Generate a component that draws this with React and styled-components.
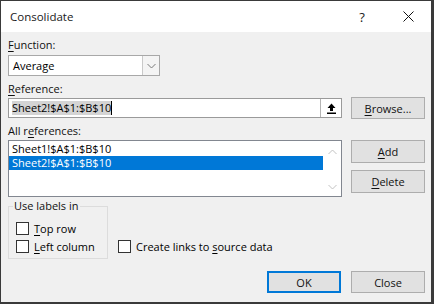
import React from 'react';
import styled, { createGlobalStyle } from 'styled-components';

const GlobalStyle = createGlobalStyle`
  html, body { margin: 0; padding: 0; background: #fff; }
  body {
    font-family: "Open Sans", "Noto Sans", sans-serif;
    font-size: 11px;
    color: #000;
  }
  * { box-sizing: border-box; }
  u { text-decoration-thickness: 1px; text-underline-offset: 2px; }
`;

const Window = styled.div`
  width: 434px;
  height: 304px;
  border-style: solid;
  border-color: #3a3a3a;
  border-width: 1px 3px 2px 1px;
  display: flex;
  flex-direction: column;
  background: #f0f0f0;
`;

const TitleBar = styled.div`
  height: 31px;
  flex: none;
  background: #fff;
  display: flex;
  align-items: center;
  padding-left: 9px;
`;

const Title = styled.div`
  flex: 1;
  font-size: 11.5px;
  color: #1a1a1a;
`;

const TitleButton = styled.div`
  width: 46px;
  height: 31px;
  display: flex;
  align-items: center;
  justify-content: center;
  font-size: 13px;
  color: #222;
`;

const Body = styled.div`
  flex: 1;
  display: flex;
  flex-direction: column;
  padding: 5px 6px 0 7px;
`;

const FieldLabel = styled.div`
  height: 16px;
  line-height: 16px;
  margin-top: ${(p) => p.$gap || 0}px;
  color: #111;
`;

const Select = styled.div`
  margin-top: 2px;
  width: 152px;
  height: 21px;
  border: 1px solid #a8a8a8;
  background: #fff;
  display: flex;
`;

const SelectValue = styled.div`
  flex: 1;
  padding-left: 4px;
  line-height: 19px;
`;

const SelectArrow = styled.div`
  width: 17px;
  border-left: 1px solid #c9c9c9;
  background: #f4f4f4;
  display: flex;
  align-items: center;
  justify-content: center;
`;

const Row = styled.div`
  display: flex;
  gap: 9px;
  align-items: ${(p) => p.$align || 'center'};
  margin-top: ${(p) => p.$gap || 0}px;
`;

const RefInput = styled.div`
  width: 334px;
  height: 20px;
  border: 1px solid #9a9a9a;
  background: #fff;
  display: flex;
`;

const RefText = styled.div`
  flex: 1;
  padding-left: 3px;
  display: flex;
  align-items: center;
`;

const Selection = styled.span`
  background: #d4d4d4;
  line-height: 14px;
`;

const Caret = styled.span`
  width: 1px;
  height: 14px;
  background: #000;
`;

const CollapseButton = styled.div`
  width: 21px;
  border-left: 1px solid #b4b4b4;
  display: flex;
  align-items: center;
  justify-content: center;
`;

const Button = styled.div`
  width: 74px;
  height: ${(p) => p.$h || 22}px;
  border: ${(p) => (p.$default ? '2px solid #0078d7' : '1px solid #adadad')};
  background: #e1e1e1;
  display: flex;
  align-items: center;
  justify-content: center;
  color: #111;
`;

const ListBox = styled.div`
  width: 334px;
  height: 57px;
  border: 1px solid #828790;
  background: #fff;
  display: flex;
`;

const ListItems = styled.div`
  flex: 1;
  padding-top: 1px;
`;

const ListItem = styled.div`
  height: 14px;
  line-height: 14px;
  padding-left: 3px;
  overflow: hidden;
  background: ${(p) => (p.$selected ? '#0078d7' : 'transparent')};
  color: ${(p) => (p.$selected ? '#fff' : '#000')};
`;

const ScrollBar = styled.div`
  width: 18px;
  display: flex;
  flex-direction: column;
  justify-content: space-between;
  align-items: center;
  padding: 8px 0 6px;
`;

const SideButtons = styled.div`
  display: flex;
  flex-direction: column;
  gap: 7px;
`;

const BottomArea = styled.div`
  display: flex;
  align-items: flex-end;
  margin-top: 2px;
`;

const Group = styled.fieldset`
  width: 100px;
  height: 60px;
  margin: 0;
  padding: 0 0 0 7px;
  border: 1px solid #dcdcdc;
`;

const Legend = styled.legend`
  padding: 0 1px;
  margin-left: -3px;
  line-height: 14px;
  color: #111;
`;

const CheckRow = styled.label`
  display: flex;
  align-items: center;
  gap: 5px;
  height: 18px;
  margin-top: ${(p) => p.$gap || 0}px;
  margin-left: ${(p) => p.$indent || 0}px;
  margin-bottom: ${(p) => p.$below || 0}px;
`;

const CheckBox = styled.span`
  width: 13px;
  height: 13px;
  border: 1px solid #333;
  background: #fff;
`;

const ActionRow = styled.div`
  display: flex;
  justify-content: flex-end;
  gap: 10px;
  margin-top: 12px;
`;

const Chevron = ({ up, color = '#7a7a7a' }) => (
  <svg width="9" height="6" viewBox="0 0 9 6">
    <path d={up ? 'M0.5 5 L4.5 1 L8.5 5' : 'M0.5 1 L4.5 5 L8.5 1'} fill="none" stroke={color} strokeWidth="1" />
  </svg>
);

const CollapseIcon = () => (
  <svg width="9" height="11" viewBox="0 0 9 11">
    <path d="M4.5 0.5 L8.5 5 L6 5 L6 8 L3 8 L3 5 L0.5 5 Z" fill="#000" />
    <rect x="0" y="9.5" width="9" height="1.5" fill="#000" />
  </svg>
);

const CloseIcon = () => (
  <svg width="11" height="11" viewBox="0 0 11 11">
    <path d="M0.5 0.5 L10.5 10.5 M10.5 0.5 L0.5 10.5" stroke="#111" strokeWidth="1" />
  </svg>
);

export default function App() {
  return (
    <>
      <GlobalStyle />
      <Window>
        <TitleBar>
          <Title>Consolidate</Title>
          <TitleButton>?</TitleButton>
          <TitleButton><CloseIcon /></TitleButton>
        </TitleBar>
        <Body>
          <FieldLabel><u>F</u>unction:</FieldLabel>
          <Select>
            <SelectValue>Average</SelectValue>
            <SelectArrow><Chevron /></SelectArrow>
          </Select>

          <FieldLabel $gap={5}><u>R</u>eference:</FieldLabel>
          <Row>
            <RefInput>
              <RefText>
                <Selection>Sheet2!$A$1:$B$10</Selection>
                <Caret />
              </RefText>
              <CollapseButton><CollapseIcon /></CollapseButton>
            </RefInput>
            <Button><span><u>B</u>rowse...</span></Button>
          </Row>

          <FieldLabel $gap={4}>All r<u>e</u>ferences:</FieldLabel>
          <Row $align="flex-start" $gap={1}>
            <ListBox>
              <ListItems>
                <ListItem>Sheet1!$A$1:$B$10</ListItem>
                <ListItem $selected>Sheet2!$A$1:$B$10</ListItem>
              </ListItems>
              <ScrollBar>
                <Chevron up color="#c2c2c2" />
                <Chevron color="#c2c2c2" />
              </ScrollBar>
            </ListBox>
            <SideButtons>
              <Button $h={23}><span><u>A</u>dd</span></Button>
              <Button $h={23}><span><u>D</u>elete</span></Button>
            </SideButtons>
          </Row>

          <BottomArea>
            <Group>
              <Legend>Use labels in</Legend>
              <CheckRow $gap={6}><CheckBox /><span><u>T</u>op row</span></CheckRow>
              <CheckRow><CheckBox /><span><u>L</u>eft column</span></CheckRow>
            </Group>
            <CheckRow $indent={10} $below={4}>
              <CheckBox />
              <span>Create links to <u>s</u>ource data</span>
            </CheckRow>
          </BottomArea>

          <ActionRow>
            <Button $default>OK</Button>
            <Button>Close</Button>
          </ActionRow>
        </Body>
      </Window>
    </>
  );
}
